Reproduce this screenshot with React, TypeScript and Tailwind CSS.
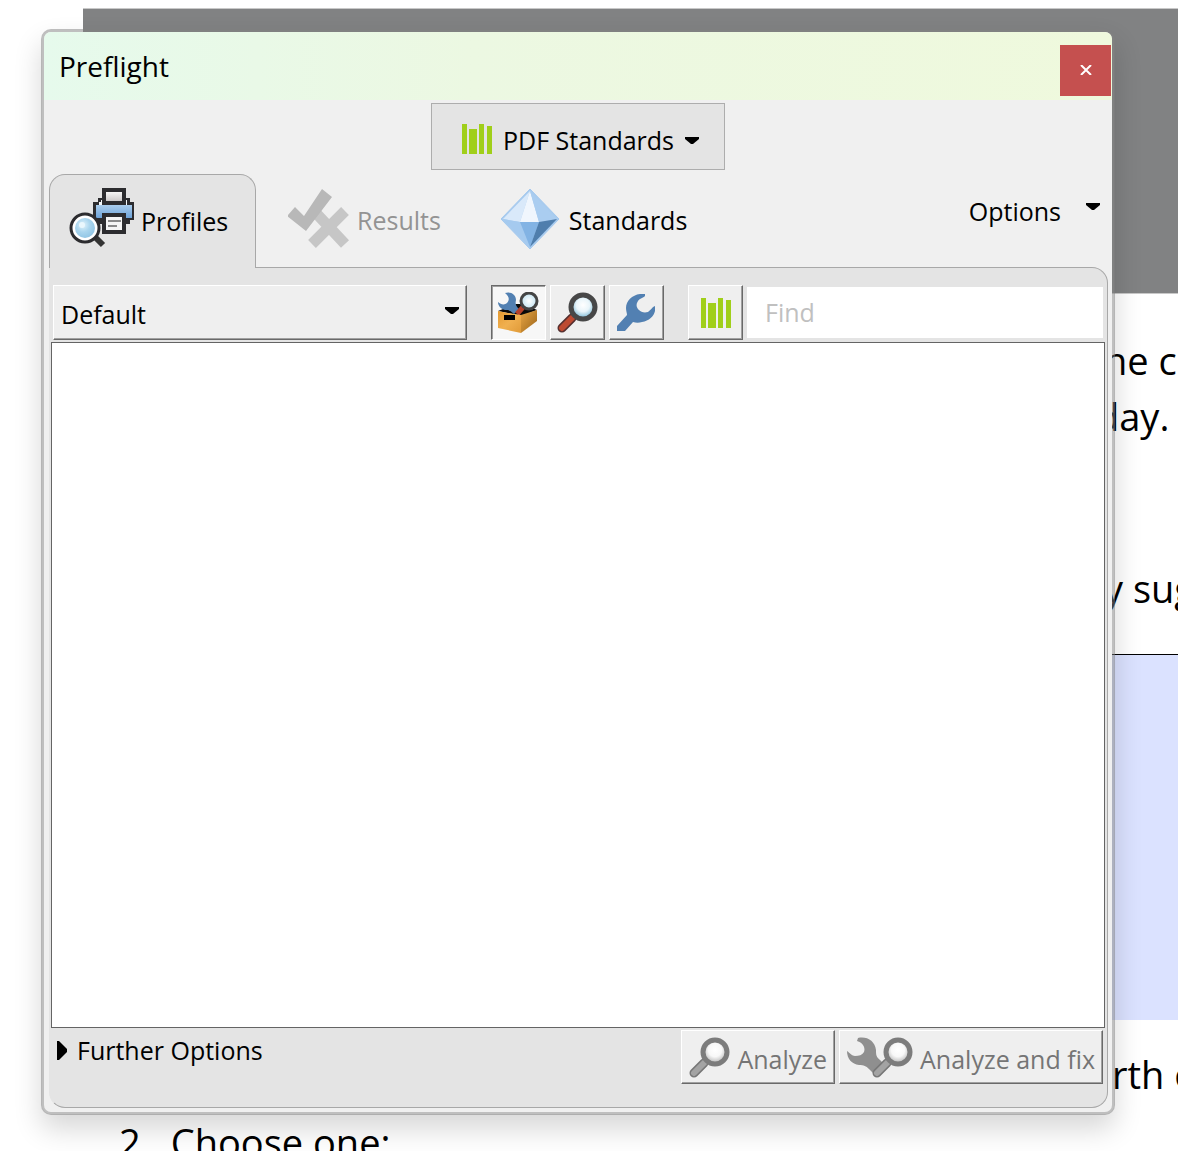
import React, { useState } from 'react';

const GREEN = '#a0cf1a';

const CaretDown: React.FC<{ className?: string }> = ({ className }) => (
  <svg width="14" height="7" viewBox="0 0 14 7" className={className} aria-hidden="true">
    <path d="M0 0h14v2L8 7H6L0 2z" fill="#000" />
  </svg>
);

const BarsIcon = () => (
  <svg width="31" height="30" viewBox="0 0 31 30" fill={GREEN} shapeRendering="crispEdges" aria-hidden="true">
    <rect x="1" y="0" width="5" height="30" />
    <rect x="8" y="5" width="8" height="25" />
    <rect x="18" y="0" width="5" height="30" />
    <rect x="26" y="2" width="5" height="28" />
  </svg>
);

const PrinterIcon = () => (
  <svg width="66" height="66" viewBox="0 1 66 66" aria-hidden="true">
    <defs>
      <linearGradient id="body" x1="0" y1="0" x2="0" y2="1">
        <stop offset="0" stopColor="#a9ccec" />
        <stop offset="1" stopColor="#6ea3d8" />
      </linearGradient>
      <linearGradient id="paper" x1="0" y1="0" x2="0" y2="1">
        <stop offset="0" stopColor="#fff" />
        <stop offset="1" stopColor="#c4c0c0" />
      </linearGradient>
      <radialGradient id="lens" cx="0.4" cy="0.35" r="0.7">
        <stop offset="0" stopColor="#e2f3fb" />
        <stop offset="0.5" stopColor="#a9d5ee" />
        <stop offset="1" stopColor="#8fc4e4" />
      </radialGradient>
    </defs>
    <path d="M29 11h32v4h4v18h-4v4H28v-4h-4V15h5z" fill="#2c2c2f" />
    <path d="M32 13h26v5H30v-3h2z" fill="#f4f7fa" />
    <path d="M27 18h36v13H27z" fill="url(#body)" />
    <path d="M35 3h20v13H35z" fill="url(#paper)" stroke="#2c2c2f" strokeWidth="4" />
    <path d="M35 28h20v17H35z" fill="#f5f5f5" stroke="#2c2c2f" strokeWidth="4" />
    <path d="M39 34h13M39 39h9" stroke="#8a8a8a" strokeWidth="2" />
    <path d="M26 50l8 8" stroke="#333" strokeWidth="6" />
    <circle cx="16" cy="41" r="14" fill="#fff" stroke="#2c2c2f" strokeWidth="3" />
    <circle cx="16" cy="41" r="10" fill="url(#lens)" />
    <circle cx="13" cy="38" r="3" fill="#eaf7fd" />
  </svg>
);

const ResultsIcon = () => (
  <svg width="63" height="61" viewBox="1 0 63 61" aria-hidden="true">
    <path d="M58 22L25 55M28 23l30 32" stroke="#c6c6c6" strokeWidth="11" />
    <path d="M0 27l8-9 9 9L35 0l10 8-26 34z" fill="#b8b8b8" />
  </svg>
);

const CrystalIcon = () => (
  <svg width="60" height="62" viewBox="1 0 60 62" aria-hidden="true">
    <path d="M30 0L59 30 30 60 1 30z" fill="#a8cbee" />
    <path d="M30 2L3 30l17 3z" fill="#d9e9fa" />
    <path d="M30 2L20 33h19z" fill="#f0f6fd" />
    <path d="M30 2l9 31 18-3z" fill="#aacdf0" />
    <path d="M3 30l17 3 10 25z" fill="#a5caef" />
    <path d="M20 33h19l-9 25z" fill="#82b3e4" />
    <path d="M39 33l18-3-27 28z" fill="#4f7ead" />
    <path d="M30 0L59 30 30 60 1 30z" fill="none" stroke="#a3c8ee" strokeWidth="1" />
  </svg>
);

const ToolboxIcon = () => (
  <svg width="41" height="41" viewBox="0 0 41 41" aria-hidden="true">
    <defs>
      <linearGradient id="box" x1="0" y1="0" x2="1" y2="1">
        <stop offset="0" stopColor="#e59a30" />
        <stop offset="0.5" stopColor="#f0b050" />
        <stop offset="1" stopColor="#e09a38" />
      </linearGradient>
      <linearGradient id="boxSide" x1="0" y1="0" x2="1" y2="1">
        <stop offset="0" stopColor="#e8a545" />
        <stop offset="1" stopColor="#9a6418" />
      </linearGradient>
      <radialGradient id="smallLens">
        <stop offset="0" stopColor="#fff" />
        <stop offset="1" stopColor="#c3e3f1" />
      </radialGradient>
    </defs>
    <path d="M0 19l18-7h8l13 6-15 6z" fill="#0a0a0a" />
    <path
      d="M7 1c6-2 11 2 11 7-1 4 0 6 3 9l-5 5c-4-4-6-4-9-4-4-1-7-4-7-8 3 3 7 3 9 1 3-3 2-7-2-10z"
      fill="#5280b2"
    />
    <path d="M26 14l-7 8" stroke="#b4402a" strokeWidth="5" />
    <path d="M0 19l10 2 13 2v18L0 36z" fill="url(#box)" />
    <path d="M23 23l16-5v11L23 41z" fill="url(#boxSide)" />
    <path d="M6 23h11v5H6z" fill="#000" />
    <circle cx="31" cy="9" r="8" fill="url(#smallLens)" stroke="#454545" strokeWidth="3" />
  </svg>
);

const Magnifier: React.FC<{ gray?: boolean }> = ({ gray }) => (
  <>
    <defs>
      <radialGradient id={gray ? 'lensGray' : 'lensBlue'} cx="0.5" cy="0.42" r="0.55">
        <stop offset="0" stopColor="#fff" />
        <stop offset="0.5" stopColor={gray ? '#f8f8f8' : '#e9f5fa'} />
        <stop offset="1" stopColor={gray ? '#b4b4b4' : '#74b4d2'} />
      </radialGradient>
    </defs>
    <path d="M15 26L5 36" stroke={gray ? '#777' : '#553030'} strokeWidth="9" strokeLinecap="round" />
    <path d="M15 26L5 36" stroke={gray ? '#a3a3a3' : '#bd4a31'} strokeWidth="6" strokeLinecap="round" />
    <circle
      cx="26"
      cy="15"
      r="12"
      fill={gray ? 'url(#lensGray)' : 'url(#lensBlue)'}
      stroke={gray ? '#7c7c7c' : '#474747'}
      strokeWidth="5"
    />
  </>
);

const MagnifierIcon: React.FC<{ gray?: boolean }> = ({ gray }) => (
  <svg width="41" height="41" viewBox="0 0 41 41" aria-hidden="true">
    <Magnifier gray={gray} />
  </svg>
);

const WrenchIcon = () => (
  <svg width="40" height="38" viewBox="0 0 40 38" aria-hidden="true">
    <path
      d="M28 0h-5C15 1 9 7 9 14c0 3 1 5 1 7L0 32v5h8l8-9c3 1 6 1 9 0 7-1 12-6 13-11v-5c-3 1-4 4-7 6-4 1-7 0-9-2-3-3-3-6-1-9 2-3 5-3 7-5z"
      fill="#5280b2"
    />
  </svg>
);

const FixIcon = () => (
  <svg width="66" height="41" viewBox="0 0 66 41" aria-hidden="true">
    <path
      d="M11 1c9-2 17 3 18 12 0 4 0 7 4 10l3 3-10 10-4-4c-3-3-5-4-10-4C5 27 0 22 0 14c3 2 5 5 8 5 4 0 7-1 9-4 2-6-3-10-7-11z"
      fill="#8f8f8f"
    />
    <g transform="translate(25 0)">
      <Magnifier gray />
    </g>
  </svg>
);

// raised and sunken classic window borders
const raised =
  'border border-t-white border-l-white border-r-[#696969] border-b-[#696969] shadow-[inset_-1px_-1px_0_#a0a0a0] bg-[#efefef]';
const sunken =
  'border border-t-[#696969] border-l-[#696969] border-r-white border-b-white shadow-[inset_1px_1px_0_#a0a0a0] bg-[#f7f7f7]';

const filters = [
  { id: 'all', label: 'Show all', icon: <ToolboxIcon /> },
  { id: 'checks', label: 'Show checks', icon: <MagnifierIcon /> },
  { id: 'fixups', label: 'Show fixups', icon: <WrenchIcon /> },
];

const DocumentPage = () => (
  <div className="pt-2 text-[38px] leading-[56px] whitespace-nowrap text-black">
    <div className="ml-[83px] h-[286px] border-t border-b border-[#c8c8c8] bg-[#818283]" />
    <div className="ml-[1104px] pt-[38px]">
      <p>he c</p>
      <p className="-ml-2">day.</p>
      <p className="mt-29">y sug</p>
    </div>
    <div className="mt-[38px] ml-[83px] h-[366px] border-t border-black bg-[#dbe2ff]" />
    <p className="mt-[26px] ml-[1112px]">rth o</p>
    <ol className="mt-3 ml-[119px]">
      <li className="flex gap-5">
        <span>2.</span>
        <span>Choose one:</span>
      </li>
    </ol>
  </div>
);

const App: React.FC = () => {
  const [filter, setFilter] = useState('all');
  const [query, setQuery] = useState('');

  return (
    <div className="relative h-screen overflow-hidden bg-white font-['Open_Sans',sans-serif]">
      <DocumentPage />

      <div
        role="dialog"
        aria-labelledby="title"
        className="absolute top-[29px] right-[63px] bottom-9 left-[41px] flex flex-col overflow-hidden rounded-[10px] border-3 border-[#808080]/50 bg-[#f0f0f0] bg-clip-padding text-[25px] leading-8 text-black shadow-[0_14px_28px_rgba(0,0,0,0.16)]"
      >
        {/* Title bar */}
        <div className="flex h-17 shrink-0 items-center justify-between bg-linear-to-r from-[#e6faec] via-[#ecf8e2] via-40% to-[#eff9dd] pr-px pl-[15px]">
          <h1 id="title" className="text-[28px]">Preflight</h1>
          <button aria-label="Close" className="mt-2 flex size-[51px] items-center justify-center bg-[#c5504f]">
            <svg width="12" height="10" viewBox="0 0 12 10" aria-hidden="true">
              <path d="M1 0l10 10M11 0L1 10" stroke="#fff" strokeWidth="2" />
            </svg>
          </button>
        </div>

        {/* Library */}
        <div className="flex shrink-0 justify-center pt-[3px]">
          <button className="flex h-[67px] items-center gap-[11px] border border-[#adadad] bg-[#e4e4e4] pt-1 pr-[25px] pl-[29px]">
            <BarsIcon />
            <span className="pt-[2px]">PDF Standards</span>
            <CaretDown className="mt-1" />
          </button>
        </div>

        {/* Tabs */}
        <div className="relative z-10 -mb-px flex shrink-0 items-start pt-1 pr-3 pl-[5px]">
          <div role="tablist" className="flex">
            <button
              role="tab"
              aria-selected="true"
              className="flex h-[94px] w-[207px] items-center gap-[6px] rounded-t-[16px] border border-b-0 border-[#a8a8a8] bg-[#e4e4e4] pb-[2px] pl-[19px]"
            >
              <PrinterIcon />
              Profiles
            </button>
            <button
              role="tab"
              aria-selected="false"
              disabled
              className="ml-8 flex h-[93px] items-center gap-[6px] pb-[2px] text-[#939393]"
            >
              <ResultsIcon />
              Results
            </button>
            <button role="tab" aria-selected="false" className="ml-15 flex h-[93px] items-center gap-2 pb-[2px]">
              <CrystalIcon />
              Standards
            </button>
          </div>
          <button className="mt-[21px] ml-auto flex items-start gap-[25px]">
            Options
            <CaretDown className="mt-2" />
          </button>
        </div>

        {/* Panel */}
        <div className="mr-1 mb-1 ml-[5px] flex min-h-0 flex-1 flex-col rounded-tr-[16px] rounded-b-[16px] border border-[#a8a8a8] border-l-[#e4e4e4] bg-[#e4e4e4] pt-[17px] pr-[2px] pb-[23px] pl-px">
          <div className="flex items-center pr-[2px] pl-[2px]">
            <div className="relative w-[414px]">
              <select aria-label="Library" className={`h-[55px] w-full appearance-none pt-[2px] pl-[7px] outline-none ${raised}`}>
                <option>Default</option>
              </select>
              <CaretDown className="pointer-events-none absolute top-[22px] right-2" />
            </div>
            <div className="ml-6 flex gap-1">
              {filters.map((f) => (
                <button
                  key={f.id}
                  aria-label={f.label}
                  aria-pressed={filter === f.id}
                  onClick={() => setFilter(f.id)}
                  className={`flex size-[55px] items-center justify-center ${filter === f.id ? sunken : raised}`}
                >
                  {f.icon}
                </button>
              ))}
            </div>
            <button aria-label="Standards only" className={`ml-6 flex size-[55px] items-center justify-center ${raised}`}>
              <BarsIcon />
            </button>
            <input
              type="text"
              aria-label="Find"
              placeholder="Find"
              value={query}
              onChange={(e) => setQuery(e.target.value)}
              className="ml-1 h-[51px] min-w-0 flex-1 bg-white px-[18px] pb-[2px] outline-none placeholder:text-[#c0c0c0]"
            />
          </div>

          <div className="mt-[2px] min-h-0 flex-1 border border-[#646464] bg-white" />

          <div className="mt-[2px] flex items-start justify-between pr-[2px] pl-[6px]">
            <button aria-expanded="false" className="mt-1 flex items-center gap-[9px]">
              <svg width="11" height="19" viewBox="0 0 11 19" aria-hidden="true">
                <path d="M0 0h2l8 8v3l-8 8H0z" fill="#000" />
              </svg>
              Further Options
            </button>
            <div className="flex gap-1 text-[#757575]">
              <button disabled className={`flex h-[54px] items-center gap-[7px] px-[7px] ${raised}`}>
                <MagnifierIcon gray />
                <span className="pt-1">Analyze</span>
              </button>
              <button disabled className={`flex h-[54px] items-center gap-[7px] px-[7px] ${raised}`}>
                <FixIcon />
                <span className="pt-1">Analyze and fix</span>
              </button>
            </div>
          </div>
        </div>
      </div>
    </div>
  );
};

export default App;
